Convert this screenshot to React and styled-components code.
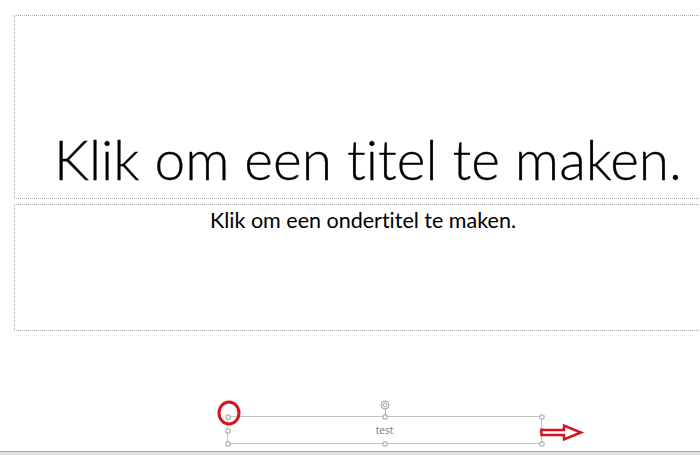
import React from 'react';
import styled, { createGlobalStyle } from 'styled-components';

const GlobalStyle = createGlobalStyle`
  html, body {
    margin: 0;
    padding: 0;
    background: #ffffff;
    overflow: hidden;
  }
`;

const Page = styled.div`
  width: 700px;
  height: 455px;
  display: flex;
  flex-direction: column;
  overflow: hidden;
  background: #ffffff;
  font-family: Lato, "Open Sans", sans-serif;
  font-variant-ligatures: none;
`;

const Canvas = styled.div`
  flex: 1;
  display: flex;
  flex-direction: column;
  padding: 15px 0 0 14px;
  box-sizing: border-box;
`;

const Placeholder = styled.div`
  box-sizing: border-box;
  width: 695px;
  height: ${p => p.$h}px;
  flex-shrink: 0;
  border: 1px dotted #a9a9a9;
  display: flex;
  justify-content: center;
  align-items: ${p => (p.$bottom ? 'flex-end' : 'flex-start')};
  margin-top: ${p => p.$mt || 0}px;
`;

const Title = styled.div`
  font-weight: 300;
  font-size: 55px;
  line-height: 1;
  color: #000;
  padding-bottom: 11px;
  padding-left: 13px;
  white-space: nowrap;
  -webkit-text-stroke: 0.3px #000;
`;

const Subtitle = styled.div`
  font-size: 21.5px;
  line-height: 1;
  color: #000;
  padding-top: 5px;
  padding-left: 3px;
  white-space: nowrap;
`;

const ShapeBox = styled.div`
  position: relative;
  box-sizing: border-box;
  margin: 85px 0 0 213px;
  width: 315px;
  height: 28px;
  border: 1px solid #c4c4c4;
  display: flex;
  align-items: center;
  justify-content: center;
  font-family: "Open Sans", sans-serif;
  font-size: 10px;
  color: #7a7a7a;
`;

const Handle = styled.span`
  position: absolute;
  width: 5px;
  height: 5px;
  box-sizing: border-box;
  border: 1px solid #9a9a9a;
  border-radius: 1px;
  background: #fff;
  left: ${p => p.$x}px;
  top: ${p => p.$y}px;
  transform: translate(-50%, -50%);
`;

const RotateLine = styled.span`
  position: absolute;
  left: 50%;
  top: -10px;
  width: 1px;
  height: 10px;
  background: #b0b0b0;
`;

const Overlay = styled.svg`
  position: absolute;
  overflow: visible;
  pointer-events: none;
`;

const BottomBar = styled.div`
  height: 3px;
  border-top: 1px solid #a6a6a6;
  background: #e2e2e2;
`;

export default function App() {
  const w = 314;
  const h = 27;
  const handles = [
    [0, 0], [w / 2, 0], [w, 0],
    [0, h / 2], [w, h / 2],
    [0, h], [w / 2, h], [w, h],
  ];
  return (
    <>
      <GlobalStyle />
      <Page>
        <Canvas>
          <Placeholder $h={184} $bottom>
            <Title>Klik om een titel te maken.</Title>
          </Placeholder>
          <Placeholder $h={127} $mt={5}>
            <Subtitle>Klik om een ondertitel te maken.</Subtitle>
          </Placeholder>
          <ShapeBox>
            test
            <RotateLine />
            {handles.map(([x, y], i) => (
              <Handle key={i} $x={x} $y={y} />
            ))}
            <Overlay style={{ left: w / 2 - 6, top: -18 }} width="12" height="12">
              <circle cx="6" cy="6" r="4" fill="#fff" stroke="#a0a0a0" strokeWidth="1" />
              <circle cx="6" cy="6" r="2" fill="none" stroke="#a0a0a0" strokeWidth="1" />
            </Overlay>
            <Overlay style={{ left: -11, top: -15 }} width="24" height="24">
              <ellipse cx="12" cy="11" rx="10" ry="11" fill="none" stroke="#d7141d" strokeWidth="3" />
            </Overlay>
            <Overlay style={{ left: 312, top: 7 }} width="44" height="18">
              <path
                d="M1.5 6 L24 6 L24 1.5 L41 8.5 L24 15.5 L24 11 L1.5 11 Z"
                fill="#fff"
                stroke="#d7141d"
                strokeWidth="2.5"
                strokeLinejoin="miter"
              />
            </Overlay>
          </ShapeBox>
        </Canvas>
        <BottomBar />
      </Page>
    </>
  );
}
